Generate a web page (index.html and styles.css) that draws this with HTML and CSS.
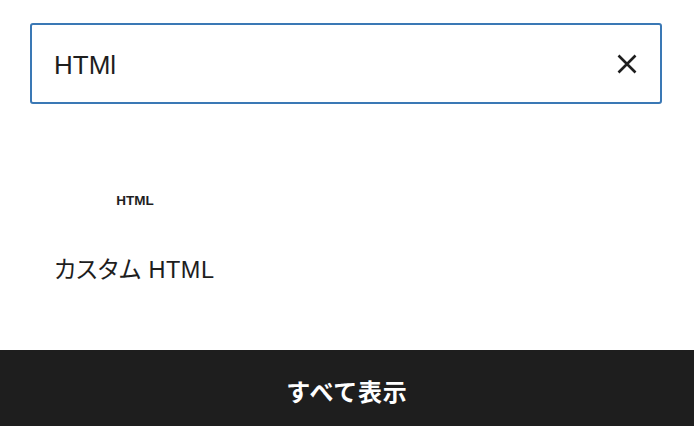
FILE: index.html
```html
<!DOCTYPE html>
<html lang="ja">
<head>
<meta charset="utf-8">
<link rel="stylesheet" href="styles.css">
</head>
<body>
<div class="panel">
  <div class="search">
    <span class="search-text">HTMl</span>
    <svg class="close" width="20" height="20" viewBox="0 0 20 20" aria-hidden="true">
      <path d="M1.5 1.5 L18.5 18.5 M18.5 1.5 L1.5 18.5" stroke="#1e1e1e" stroke-width="2.6" fill="none"/>
    </svg>
  </div>
  <div class="results">
    <div class="item">
      <div class="item-icon">HTML</div>
      <div class="item-title">カスタム HTML</div>
    </div>
  </div>
</div>
<div class="footer">すべて表示</div>
</body>
</html>
```
FILE: styles.css
```css
html, body {
  margin: 0;
  padding: 0;
  background: #ffffff;
  height: 100%;
}
body {
  display: flex;
  flex-direction: column;
  font-family: "Liberation Sans", "Noto Sans CJK JP", sans-serif;
  color: #1e1e1e;
}
.panel {
  flex: 1;
  padding: 23px 32px 0 30px;
}
.search {
  box-sizing: border-box;
  height: 81px;
  border: 2px solid #3a78b5;
  border-radius: 3px;
  display: flex;
  align-items: center;
  justify-content: space-between;
  padding: 3px 22px 0 22px;
}
.search-text {
  font-size: 26px;
}
.close {
  display: block;
  margin-top: -3px;
  margin-right: 1px;
}
.results {
  padding: 89px 0 0 24px;
}
.item-icon {
  width: 162px;
  text-align: center;
  font-size: 13.5px;
  font-weight: bold;
  line-height: 15px;
}
.item-title {
  margin-top: 47px;
  font-size: 23.5px;
  line-height: 30px;
  letter-spacing: 0.5px;
  font-feature-settings: "palt";
}
.footer {
  height: 76px;
  background: #1e1e1e;
  color: #ffffff;
  display: flex;
  align-items: center;
  justify-content: center;
  font-family: "Noto Sans CJK JP", sans-serif;
  font-weight: bold;
  font-size: 24px;
  letter-spacing: 0.8px;
  padding-top: 4px;
  box-sizing: border-box;
}
```
